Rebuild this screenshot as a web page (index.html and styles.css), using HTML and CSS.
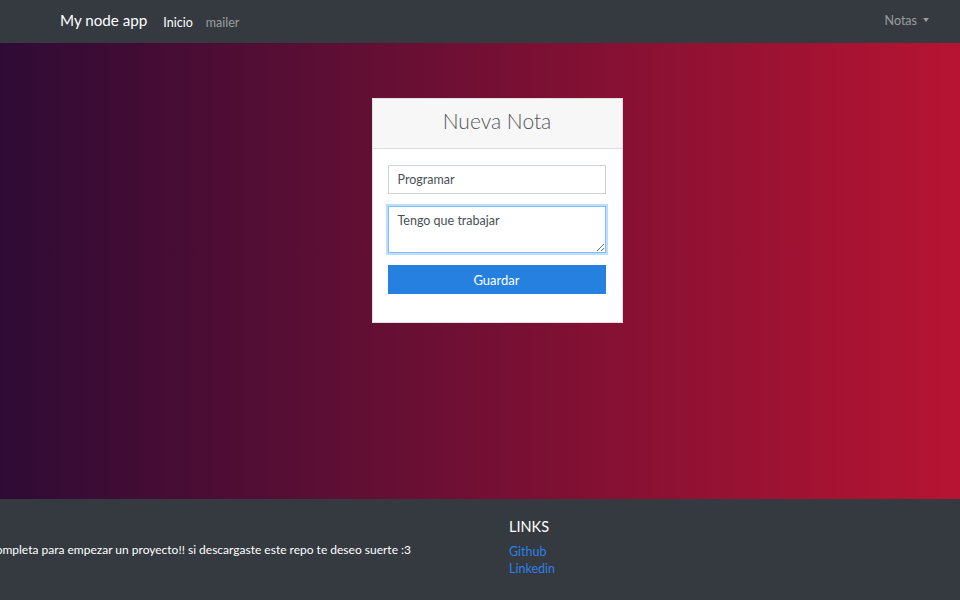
FILE: index.html
```html
<!DOCTYPE html>
<html lang="es">
<head>
<meta charset="utf-8">
<title>My node app</title>
<link rel="stylesheet" href="styles.css">
</head>
<body>
<nav class="navbar">
  <a class="brand" href="#">My node app</a>
  <ul class="nav-links">
    <li><a class="nav-link active" href="#">Inicio</a></li>
    <li><a class="nav-link" href="#">mailer</a></li>
  </ul>
  <div class="nav-right">
    <a class="nav-link dropdown" href="#">Notas <span class="caret"></span></a>
  </div>
</nav>
<main class="hero">
  <div class="card">
    <div class="card-header"><h3>Nueva Nota</h3></div>
    <form class="card-body">
      <input class="field" type="text" value="Programar">
      <textarea class="field area">Tengo que trabajar</textarea>
      <button class="btn" type="button">Guardar</button>
    </form>
  </div>
</main>
<footer class="footer">
  <div class="foot-left">
    <p class="foot-text">Esta es una plantilla completa para empezar un proyecto!! si descargaste este repo te deseo suerte :3</p>
  </div>
  <div class="foot-right">
    <h5>LINKS</h5>
    <a href="#">Github</a>
    <a href="#">Linkedin</a>
  </div>
</footer>
</body>
</html>
```
FILE: styles.css
```css
* { box-sizing: border-box; }
html, body { margin: 0; padding: 0; }
body {
  font-family: Lato, "Open Sans", sans-serif;
  width: 960px;
  height: 600px;
  overflow: hidden;
  background: #343a40;
}
a { text-decoration: none; }
.navbar {
  height: 43px;
  background: #343a40;
  display: flex;
  align-items: center;
  padding: 0 31px 3px 60px;
}
.brand {
  color: #fff;
  font-size: 15.2px;
  margin-right: 16px;
}
.nav-links {
  display: flex;
  list-style: none;
  margin: 0;
  padding: 0;
  gap: 13px;
}
.nav-link {
  color: rgba(255,255,255,0.5);
  font-size: 12.5px;
}
.nav-link.active { color: #fff; }
.nav-right { margin-left: auto; }
.dropdown { display: flex; align-items: center; gap: 6px; }
.caret {
  width: 0; height: 0;
  border-left: 3.5px solid transparent;
  border-right: 3.5px solid transparent;
  border-top: 4px solid rgba(255,255,255,0.5);
}
.hero {
  height: 456px;
  background: linear-gradient(to right, #2e0b35, #b71432);
  display: flex;
  justify-content: center;
  padding-top: 55px;
  padding-left: 34px;
}
.card {
  width: 251px;
  height: 225px;
  background: #fff;
  border: 1px solid rgba(0,0,0,0.125);
}
.card-header {
  height: 50px;
  background: #f7f7f7;
  border-bottom: 1px solid #dcdcdc;
  display: flex;
  align-items: center;
  justify-content: center;
  padding-bottom: 6px;
}
.card-header h3 {
  margin: 0;
  font-weight: 300;
  font-size: 21px;
  color: #555;
}
.card-body {
  padding: 16px 15px;
  display: flex;
  flex-direction: column;
}
.field {
  font-family: inherit;
  width: 218px;
  height: 29px;
  border: 1px solid #ced4da;
  padding: 4px 9px;
  font-size: 12.5px;
  color: #495057;
  margin: 0 0 12px 0;
  outline: none;
}
.area {
  height: 47px;
  border: 1px solid #80bdff;
  box-shadow: 0 0 0 2px rgba(0,123,255,0.25);
  resize: vertical;
  padding-top: 6px;
}
.btn {
  font-family: inherit;
  width: 218px;
  height: 29px;
  background: #2680e0;
  border: 1px solid #2680e0;
  color: #fff;
  font-size: 13px;
  padding: 0;
}
.footer {
  height: 101px;
  display: flex;
  color: #fff;
}
.foot-left {
  width: 494px;
  display: flex;
  justify-content: flex-end;
  overflow: hidden;
  padding-right: 83px;
  padding-top: 43px;
}
.foot-text {
  margin: 0;
  white-space: nowrap;
  font-size: 12px;
}
.foot-right {
  padding-left: 15px;
  padding-top: 19px;
  display: flex;
  flex-direction: column;
}
.foot-right h5 {
  margin: 0 0 8px 0;
  font-weight: 400;
  font-size: 14.5px;
  color: #fff;
}
.foot-right a {
  color: #2f7fe8;
  font-size: 12.5px;
  line-height: 17px;
}
```
